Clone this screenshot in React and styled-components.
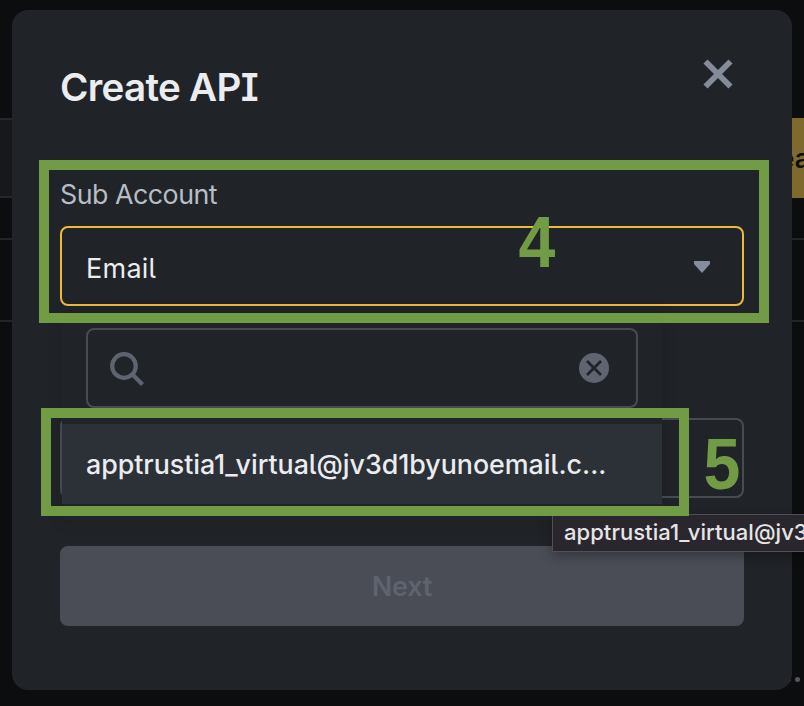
import React from "react";
import styled, { createGlobalStyle } from "styled-components";

const Global = createGlobalStyle`
  * { box-sizing: border-box; }
  body { margin: 0; background: #0b0d0f; overflow: hidden; }
`;

const Page = styled.div`
  position: relative;
  width: 804px;
  height: 706px;
  overflow: hidden;
  color: #eaecef;
  font-family: Inter, "Liberation Sans", sans-serif;
  font-feature-settings: "cv05", "cv08";
`;

const Backdrop = styled.div`
  display: flex;
  flex-direction: column;
  height: 100%;
  padding-top: 118px;
`;

const Toolbar = styled.div`
  display: flex;
  justify-content: space-between;
  height: 80px;
`;

const ToolbarField = styled.div`
  width: 400px;
  background: #16181c;
  border: solid #24272c;
  border-width: 2px 0;
`;

const CreateButton = styled.div`
  width: 60px;
  padding-left: 35px;
  background: #7f6a2e;
  color: #0b0d0f;
  font-size: 26px;
  font-weight: 600;
  line-height: 82px;
`;

const TableRow = styled.div`
  height: 84px;
  margin-top: 40px;
  border: solid #24252a;
  border-width: 2px 0;
`;

const Ellipsis = styled.div`
  display: flex;
  gap: 4px;
  justify-content: flex-end;
  margin: 355px 4px 0 0;
`;

const Dot = styled.i`
  width: 5px;
  height: 5px;
  border-radius: 50%;
  background: #55585e;
`;

const Modal = styled.section`
  position: absolute;
  left: 12px;
  top: 10px;
  width: 780px;
  height: 680px;
  padding: 48px 48px 0;
  border-radius: 16px;
  background: #202327;
`;

const Header = styled.header`
  display: flex;
  justify-content: space-between;
  height: 113px;
`;

const Title = styled.h1`
  margin: 0;
  font-size: 38.6px;
  line-height: 58px;
  font-weight: 600;
  letter-spacing: -0.7px;
`;

const CloseIcon = styled.svg`
  width: 32px;
  height: 32px;
  margin-right: 10px;
  fill: none;
  stroke: #848b99;
  stroke-width: 5.8;
`;

const Label = styled.div`
  height: 55px;
  color: #b7bdc6;
  font-size: 26.8px;
  line-height: 47px;
  letter-spacing: -0.5px;
`;

const Field = styled.div`
  display: flex;
  align-items: center;
  justify-content: space-between;
  height: 80px;
  margin-bottom: ${(p) => p.$gap};
  padding: 4px 31px 0 24px;
  border: 2px solid ${(p) => (p.$active ? "#ecb93d" : "#474b54")};
  border-radius: 8px;
  font-size: 27px;
  letter-spacing: 0.25px;
`;

const Arrow = styled.svg`
  width: 18px;
  height: 12px;
  margin-top: -2px;
  fill: #858d9c;
`;

const Dropdown = styled.div`
  position: absolute;
  left: 50px;
  top: 304px;
  width: 600px;
  height: 206px;
  padding-top: 14px;
  background: #202327;
  box-shadow: 0 0 16px rgba(20, 23, 26, 0.12);
`;

const Search = styled.div`
  display: flex;
  align-items: center;
  justify-content: space-between;
  width: 552px;
  height: 80px;
  margin: 0 24px 16px;
  padding: 0 27px 0 21px;
  border: 2px solid #474b54;
  border-radius: 8px;
`;

const SearchIcon = styled.svg`
  width: 36px;
  height: 36px;
  fill: none;
  stroke: #5e6370;
  stroke-width: 4.2;
`;

const ClearIcon = styled.svg`
  width: 30px;
  height: 30px;
`;

const Option = styled.div`
  height: 80px;
  padding-left: 24px;
  background: #2c3037;
  font-size: 26.8px;
  font-weight: 500;
  line-height: 81px;
  letter-spacing: -0.03px;
  white-space: nowrap;
`;

const NextButton = styled.button`
  display: block;
  width: 100%;
  height: 80px;
  padding: 0;
  border: 0;
  border-radius: 8px;
  background: #4a4d55;
  color: #5e6370;
  font: 600 27px Inter, sans-serif;
  letter-spacing: -0.2px;
`;

const Tooltip = styled.div`
  position: absolute;
  left: 552px;
  top: 514px;
  width: 300px;
  height: 38px;
  padding-left: 11px;
  border: 1px solid #505158;
  background: #29262e;
  box-shadow: 0 4px 12px rgba(0, 0, 0, 0.3);
  color: #e6e5e5;
  font-size: 22px;
  font-weight: 500;
  line-height: 35px;
  letter-spacing: 0.05px;
  white-space: nowrap;
  font-feature-settings: normal;
`;

const Highlight = styled.div`
  position: absolute;
  left: ${(p) => p.$x}px;
  top: ${(p) => p.$y}px;
  width: ${(p) => p.$w}px;
  height: ${(p) => p.$h}px;
  border: 10px solid #729b45;
`;

const StepNumber = styled.div`
  position: absolute;
  left: ${(p) => p.$x}px;
  top: ${(p) => p.$y}px;
  color: #729b45;
  font: bold 72px/72px "Liberation Sans", sans-serif;
  transform: scaleX(0.92);
`;

export default function App() {
  return (
    <Page>
      <Global />
      <Backdrop>
        <Toolbar>
          <ToolbarField />
          <CreateButton>ea</CreateButton>
        </Toolbar>
        <TableRow />
        <Ellipsis><Dot /><Dot /></Ellipsis>
      </Backdrop>
      <Modal>
        <Header>
          <Title>Create API</Title>
          <CloseIcon viewBox="0 0 32 32">
            <path d="M3.5 3.5l25 25M28.5 3.5l-25 25" />
          </CloseIcon>
        </Header>
        <Label>Sub Account</Label>
        <Field $active $gap="112px">
          <span>Email</span>
          <Arrow viewBox="0 0 18 12"><path d="M1 0h16v3l-8 9-8-9z" /></Arrow>
        </Field>
        <Field $gap="48px" />
        <NextButton>Next</NextButton>
        <Dropdown>
          <Search>
            <SearchIcon viewBox="0 0 36 36">
              <circle cx="15" cy="16" r="11.8" />
              <path d="M23.5 24.5l10 10" />
            </SearchIcon>
            <ClearIcon viewBox="0 0 30 30">
              <circle cx="15" cy="15" r="15" fill="#5f6570" />
              <path d="M8 8l14 14M22 8L8 22" stroke="#202327" strokeWidth="2.8" />
            </ClearIcon>
          </Search>
          <Option>apptrustia1_virtual@jv3d1byunoemail.c...</Option>
        </Dropdown>
      </Modal>
      <Tooltip>apptrustia1_virtual@jv3d1byunoemail.com</Tooltip>
      <Highlight $x={39} $y={160} $w={730} $h={163} />
      <Highlight $x={41} $y={408} $w={648} $h={108} />
      <StepNumber $x={517} $y={206}>4</StepNumber>
      <StepNumber $x={702} $y={428}>5</StepNumber>
    </Page>
  );
}
